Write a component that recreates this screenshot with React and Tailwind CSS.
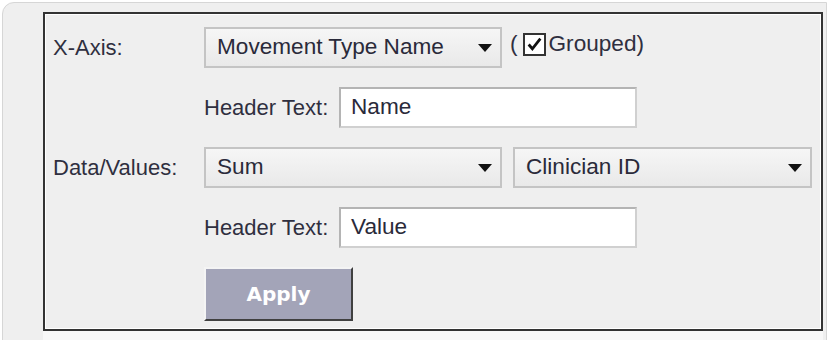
import React from "react";

function Arrow() {
  return (
    <svg width="14" height="8" viewBox="0 0 14 8" className="shrink-0">
      <path d="M0 0 L14 0 L7 8 Z" fill="#111" />
    </svg>
  );
}

function Select({ value, w }) {
  return (
    <div
      className={`${w} h-[41px] flex items-center justify-between pl-[11px] pr-[8px] border-2 border-[#c4c4c4] bg-gradient-to-b from-[#f6f6f6] to-[#e9e9e9] text-[22.6px] text-[#2a2a3a]`}
    >
      <span className="leading-none">{value}</span>
      <Arrow />
    </div>
  );
}

function Input({ value }) {
  return (
    <div className="w-[298px] h-[41px] flex items-center pl-[10px] bg-white border-2 border-t-[#b4b4b4] border-l-[#b4b4b4] border-r-[#d0d0d0] border-b-[#d0d0d0] text-[22.6px] text-[#2a2a3a]">
      <span className="leading-none">{value}</span>
    </div>
  );
}

export default function App() {
  return (
    <div
      className="w-[838px] h-[340px] bg-white overflow-hidden"
      style={{ fontFamily: '"Liberation Sans", Arial, sans-serif' }}
    >
      <div className="ml-[2px] mt-[2px] w-[825px] h-[360px] rounded-tl-[12px] border border-[#d6d6d6] bg-[#efefef] flex pt-[9px] pl-[40px]">
        <div className="flex flex-col">
          <div className="w-[780px] h-[319px] border-2 border-[#333] shadow-[inset_1px_1px_0_#fff,inset_-1px_-1px_0_#fff] bg-[#efefef] pt-[13px] pl-[8px]">
            <div className="grid grid-cols-[151px_1fr] gap-y-[19px] text-[22px] text-[#2f2f3f]">
              {/* Row 1 */}
              <div className="h-[41px] flex items-center leading-none">X-Axis:</div>
              <div className="h-[41px] flex items-start gap-[8px]">
                <Select value="Movement Type Name" w="w-[298px]" />
                <div className="flex items-center h-[41px] -mt-[3px] leading-none text-[22.6px]">
                  <span>(</span>
                  <div className="ml-[5px] w-[23px] h-[23px] border-2 border-[#333] bg-white flex items-center justify-center">
                    <svg width="17" height="17" viewBox="0 0 16 16">
                      <path d="M2.5 8 L6 12 L13.5 2.5" stroke="#111" strokeWidth="2.6" fill="none" />
                    </svg>
                  </div>
                  <span className="ml-[3px]">Grouped)</span>
                </div>
              </div>
              {/* Row 2 */}
              <div />
              <div className="h-[41px] flex items-center gap-[8px]">
                <span className="leading-none w-[127px]">Header Text:</span>
                <Input value="Name" />
              </div>
              {/* Row 3 */}
              <div className="h-[41px] flex items-center leading-none">Data/Values:</div>
              <div className="h-[41px] flex items-center gap-[11px]">
                <Select value="Sum" w="w-[298px]" />
                <Select value="Clinician ID" w="w-[299px]" />
              </div>
              {/* Row 4 */}
              <div />
              <div className="h-[41px] flex items-center gap-[8px]">
                <span className="leading-none w-[127px]">Header Text:</span>
                <Input value="Value" />
              </div>
              {/* Row 5 */}
              <div />
              <div>
                <button
                  className="w-[149px] h-[54px] bg-[#a3a4b8] border-2 border-t-[#f4f4f4] border-l-[#f4f4f4] border-r-[#404040] border-b-[#404040] text-white font-bold text-[20px] flex items-center justify-center"
                  style={{ fontFamily: '"DejaVu Sans", Verdana, sans-serif' }}
                >
                  Apply
                </button>
              </div>
            </div>
          </div>
          <div className="flex-1 bg-[#f8f8f8]" />
        </div>
      </div>
    </div>
  );
}
